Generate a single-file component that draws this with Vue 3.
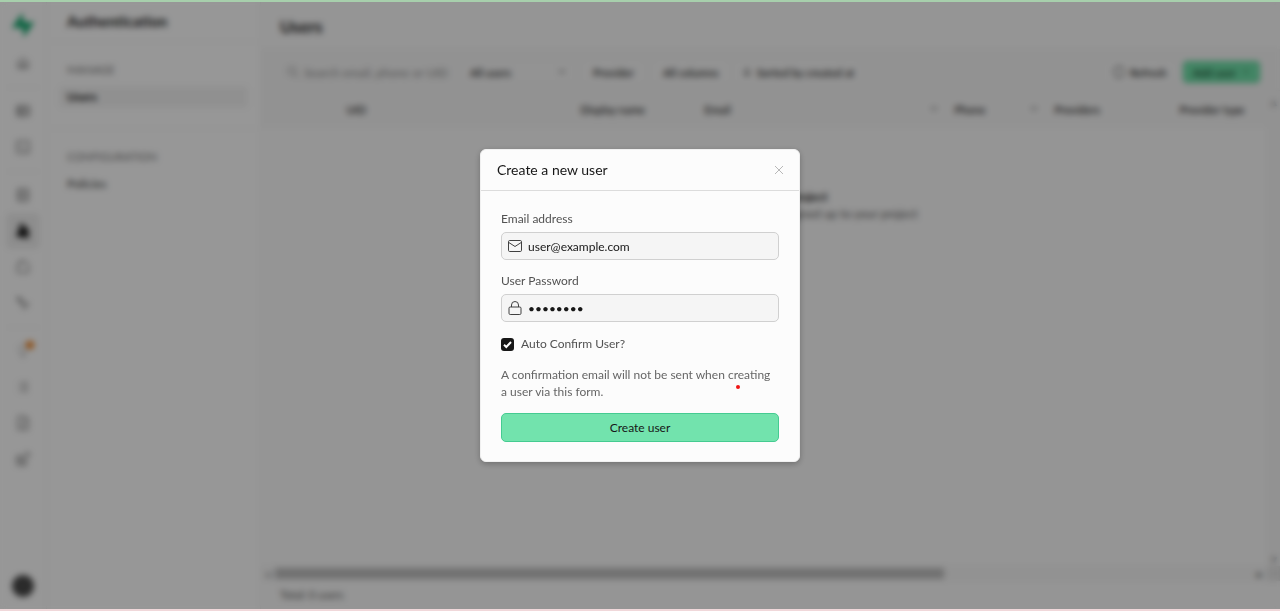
<script setup>
import { ref } from 'vue'

const email = ref('user@example.com')
const password = ref('password')
const autoConfirm = ref(true)

const railGroups = [
  [{ name: 'Home', d: 'M3 7l5-4 5 4v6H3zM6 13V9h4v4' }],
  [
    { name: 'Table editor', d: 'M2 3h12v10H2zM2 6h12M6 3v10M2 9.500h12' },
    { name: 'SQL editor', d: 'M2 2h12v12H2zM5 6l2 2-2 2M8.500 10.500h3' }
  ],
  [
    { name: 'Database', d: 'M3 2h10v12H3zM3 6h10M3 10h10M6 4h1M6 8h1M6 12h1' },
    { name: 'Authentication', d: 'M7 2a2.500 2.500 0 0 1 0 5 2.500 2.500 0 0 1 0-5M2.500 14v-3l2-2h4M9 9h4v5H9zM10 9V6h2v3M4 11h4M4 13h4', active: true },
    { name: 'Storage', d: 'M2.500 13.500V6l3-4h5l3 4v7.500zM5.500 2v4' },
    { name: 'Edge functions', d: 'M2 2l5 5M2 2l3 6 3-3zM7 8l7 1-3 2-2 3z' }
  ],
  [
    { name: 'Advisors', d: 'M6 12h4M6.500 14h3M6 10C2 7 4 2 8 2s6 5 2 8z', dot: true, faint: true },
    { name: 'Logs', d: 'M3 4h1M6 4h7M3 8h1M6 8h7M3 12h1M6 12h7' },
    { name: 'API docs', d: 'M3 1.500h7l3 3v10H3zM10 1.500v3h3M6 8h4M6 11h4' },
    { name: 'Integrations', d: 'M2 5h5v4h4v5H2zM2 9h5v5M9 7l5-5M10 2h4v4' }
  ]
]

const columns = [
  { label: '', cls: 'c-check' },
  { label: 'UID', cls: 'c-uid' },
  { label: 'Display name', cls: 'c-name' },
  { label: 'Email', cls: 'c-email', menu: true },
  { label: 'Phone', cls: 'c-phone', menu: true },
  { label: 'Providers', cls: 'c-prov' },
  { label: 'Provider type', cls: 'c-type' }
]
</script>

<template>
  <div class="screen">
    <div class="app">
      <nav class="rail">
        <a href="#" class="logo" aria-label="Dashboard">
          <svg width="22" height="22" viewBox="0 0 22 22"><path d="M10 1v8h10.500L12 21v-8H1.500z" fill="#12a56b" stroke="#12a56b" stroke-width="2" /></svg>
        </a>
        <div v-for="(group, g) in railGroups" :key="g" class="rail-group">
          <a v-for="item in group" :key="item.name" href="#" class="rail-item" :class="{ active: item.active, faint: item.faint }" :aria-label="item.name">
            <svg width="16" height="16" viewBox="0 0 16 16"><path :d="item.d" /></svg>
            <i v-if="item.dot" class="dot"></i>
          </a>
        </div>
        <button class="avatar" aria-label="Account"></button>
      </nav>

      <aside class="panel">
        <h2>Authentication</h2>
        <section>
          <h3>MANAGE</h3>
          <a href="#" class="selected">Users</a>
        </section>
        <section>
          <h3>CONFIGURATION</h3>
          <a href="#">Policies</a>
        </section>
      </aside>

      <main>
        <h1>Users</h1>
        <div class="toolbar">
          <div class="search">
            <svg width="12" height="12" viewBox="0 0 12 12"><circle cx="5" cy="5" r="4" /><path d="M8 8l4 4" /></svg>
            <input type="text" aria-label="Search users" placeholder="Search email, phone or UID" />
          </div>
          <div class="select">
            <select aria-label="User filter"><option>All users</option></select>
            <svg width="8" height="8" viewBox="0 0 8 8"><path d="M1 2l3 3 3-3" /></svg>
          </div>
          <button class="tool">Provider</button>
          <button class="tool cols">All columns</button>
          <button class="tool sort">
            <svg width="10" height="10" viewBox="0 0 10 10"><path d="M5 0v9M1 5l4 4 4-4" /></svg>
            Sorted by created at
          </button>
          <span class="spacer"></span>
          <button class="tool refresh">
            <svg width="12" height="12" viewBox="0 0 12 12"><path d="M1 7a5 5 0 0 1 9-4V1M11 5a5 5 0 0 1-9 4v2" /></svg>
            Refresh
          </button>
          <button class="tool add">
            Add user
            <svg width="8" height="8" viewBox="0 0 8 8"><path d="M1 2l3 3 3-3" /></svg>
          </button>
        </div>
        <div class="grid-area">
          <div class="grid">
            <table>
              <thead>
                <tr>
                  <th v-for="c in columns" :key="c.cls" :class="c.cls">
                    <span class="th-in">{{ c.label }}
                      <svg v-if="c.menu" width="8" height="8" viewBox="0 0 8 8"><path d="M1 2l3 3 3-3" /></svg>
                    </span>
                  </th>
                </tr>
              </thead>
            </table>
            <div class="empty">
              <strong>No users in your project</strong>
              <span>There are currently no users who signed up to your project</span>
            </div>
            <div class="hscroll"><b class="arrow">◂</b><i class="thumb"></i><b class="arrow end">▸</b></div>
          </div>
          <div class="vscroll"><b>▴</b><b class="low">▾</b><i></i></div>
        </div>
        <footer>Total: 0 users</footer>
      </main>
    </div>

    <div class="overlay">
      <div class="modal" role="dialog" aria-modal="true" aria-labelledby="dialog-title">
        <header>
          <h2 id="dialog-title">Create a new user</h2>
          <button class="close" aria-label="Close">
            <svg width="10" height="10" viewBox="0 0 10 10"><path d="M1 1l8 8M9 1l-8 8" /></svg>
          </button>
        </header>
        <form @submit.prevent>
          <div class="field">
            <label for="email">Email address</label>
            <div class="control">
              <svg width="14" height="14" viewBox="0 0 14 14"><rect x="0.5" y="1.500" width="13" height="11" rx="1.200" /><path d="M0.800 3.500L7 7.500l6.200-4" /></svg>
              <input id="email" v-model="email" type="email" autocomplete="off" />
            </div>
          </div>
          <div class="field">
            <label for="password">User Password</label>
            <div class="control">
              <svg width="14" height="14" viewBox="0 0 14 14"><rect x="1" y="6" width="12" height="7.500" rx="1.200" /><path d="M3.500 6V4a3.500 3.500 0 0 1 7 0v2" /></svg>
              <input id="password" v-model="password" type="password" autocomplete="new-password" />
            </div>
          </div>
          <div class="check">
            <input id="confirm" v-model="autoConfirm" type="checkbox" />
            <svg class="tick" width="13" height="13" viewBox="0 0 13 13"><path d="M3 6.800L5.300 9 10 4" /></svg>
            <label for="confirm">Auto Confirm User?</label>
          </div>
          <p>A confirmation email will not be sent when creating a user via this form.<i class="marker"></i></p>
          <button class="submit" type="submit">Create user</button>
        </form>
      </div>
    </div>
  </div>
</template>

<style>
html, body { margin: 0; background: #fcfcfc; }
</style>

<style scoped>
* { box-sizing: border-box; }
.screen {
  position: relative;
  height: 100vh;
  border-top: 2px solid #a7cfac;
  border-bottom: 2px solid #f0d8da;
  font-family: Lato, sans-serif;
  font-size: 11px;
  color: #222;
  overflow: hidden;
}
a { color: inherit; text-decoration: none; }
h1, h2, h3, p { margin: 0; }
button, input, select { font: inherit; color: inherit; }
svg { fill: none; stroke: currentColor; flex: none; }
.app { display: flex; height: 100%; background: #fcfcfc; }

.rail { width: 47px; flex: none; display: flex; flex-direction: column; align-items: center; border-right: 1px solid #f2f2f2; padding-bottom: 12px; }
.logo { height: 43px; display: flex; align-items: center; padding-top: 3px; }
.rail-group { display: flex; flex-direction: column; }
.rail-group + .rail-group { border-top: 1px solid #f2f2f2; margin-top: 6px; padding-top: 5px; }
.rail-item { position: relative; width: 34px; height: 36px; display: grid; place-items: center; color: #555; border-radius: 5px; }
.rail-item.active { background: #ececec; color: #000; }
.rail-item.active svg { stroke-width: 2; }
.rail-item.faint { color: #999; }
.dot { position: absolute; top: 8px; right: 6px; width: 8px; height: 8px; border-radius: 50%; background: #ec7a12; }
.avatar { margin-top: auto; width: 22px; height: 22px; border: 0; border-radius: 50%; background: #484848; }

.panel { width: 214px; flex: none; border-right: 1px solid #eee; }
.panel h2 { height: 40px; line-height: 38px; padding-left: 20px; font-size: 15px; border-bottom: 1px solid #f2f2f2; }
.panel section { padding: 20px 12px; height: 86px; }
.panel section + section { border-top: 1px solid #f2f2f2; }
.panel h3 { font-size: 11px; line-height: 16px; font-weight: 400; color: #777; padding-left: 8px; margin-bottom: 8px; }
.panel section a { display: block; height: 22px; line-height: 21px; padding-left: 8px; font-size: 12px; border-radius: 4px; color: #333; }
.panel section a.selected { background: #f1f1f1; font-weight: 700; color: #111; }

main { flex: 1; min-width: 0; display: flex; flex-direction: column; background: #f8f8f8; }
h1 { height: 48px; flex: none; line-height: 50px; padding-left: 19px; font-size: 17px; border-bottom: 1px solid #f2f2f2; }
.toolbar { height: 41px; flex: none; display: flex; align-items: center; padding: 4px 20px 0 19px; background: #f4f4f4; border-bottom: 1px solid #f0f0f0; }
.search { width: 175px; height: 22px; display: flex; align-items: center; gap: 5px; padding: 0 6px; border: 1px solid #ededed; border-radius: 4px; color: #888; }
.search input { flex: 1; min-width: 0; padding: 0; border: 0; background: none; font-size: 12px; }
.search input::placeholder { color: #888; }
.select { position: relative; width: 112px; margin: 0 8px; }
.select select { appearance: none; width: 100%; height: 22px; padding: 0 6px; border: 1px solid #f2f2f2; border-radius: 4px; background: #f5f5f5; font-weight: 500; }
.select svg { position: absolute; right: 9px; top: 7px; }
.tool { height: 22px; display: flex; align-items: center; gap: 5px; padding: 0 9px; border: 1px solid #f2f2f2; border-radius: 4px; background: #f6f6f6; font-weight: 500; color: #222; }
.cols { margin: 0 6px 0 9px; }
.sort { padding: 0 6px; }
.spacer { flex: 1; }
.refresh { margin-right: 8px; padding: 0 7px; }
.add { background: #6fdfa8; border-color: #4ecb90; color: #173d2a; gap: 6px; }

.grid-area { flex: 1; display: flex; min-height: 0; }
.grid { flex: 1; min-width: 0; display: flex; flex-direction: column; }
table { width: 100%; border-collapse: collapse; table-layout: fixed; }
th { height: 36px; padding: 0 8px; background: #f4f4f4; border-right: 1px solid #f0f0f0; text-align: left; font-weight: 500; color: #222; }
.th-in { display: flex; justify-content: space-between; align-items: center; }
.c-check { width: 77px; }
.c-uid { width: 234px; }
.c-name { width: 124px; }
.c-email { width: 250px; }
.c-phone { width: 100px; }
.c-prov { width: 125px; }
.empty { flex: 1; display: flex; flex-direction: column; align-items: center; gap: 1px; padding-top: 62px; font-size: 12px; line-height: 16px; }
.empty span { color: #555; }
.hscroll { display: flex; align-items: center; height: 15px; background: #f3f3f3; }
.arrow { width: 14px; text-align: center; color: #aaa; }
.end { margin-left: auto; color: #777; }
.thumb { width: 66.500%; height: 11px; background: #bcbcbc; }
.vscroll { width: 13px; display: flex; flex-direction: column; align-items: center; background: #f3f3f3; color: #aaa; padding-top: 4px; }
.low { margin-top: auto; }
.vscroll i { width: 13px; height: 15px; background: #e2e2e2; }
footer { height: 28px; flex: none; padding-left: 19px; line-height: 27px; font-size: 11px; color: #555; }

.overlay { position: absolute; inset: 0; display: grid; place-items: center; background: rgba(0, 0, 0, 0.4); backdrop-filter: blur(3px); }
.modal { width: 320px; background: #fcfcfc; border: 1px solid #f0f0f0; border-radius: 6px; font-size: 12px; box-shadow: 0 2px 6px rgba(0, 0, 0, 0.25); color: #171717; }
.modal header { height: 41px; display: flex; align-items: center; justify-content: space-between; padding: 0 15px 0 16px; border-bottom: 1px solid #dcdcdc; }
.modal h2 { font-size: 14px; font-weight: 400; line-height: 20px; }
.close { display: flex; padding: 0; border: 0; background: none; color: #b8b8b8; }
form { display: flex; flex-direction: column; gap: 13px; padding: 20px 20px 19px; }
.field { display: flex; flex-direction: column; gap: 5px; }
label { line-height: 16px; color: #525252; }
.control { height: 28px; display: flex; align-items: center; gap: 6px; padding: 0 6px; background: #f5f5f5; border: 1px solid #d0d0d0; border-radius: 5px; color: #404040; }
.control input { flex: 1; min-width: 0; padding: 0; border: 0; outline: 0; background: none; color: #171717; }
.check { position: relative; height: 18px; display: flex; align-items: center; gap: 7px; }
.check input { appearance: none; width: 13px; height: 13px; margin: 0; border-radius: 3px; background: #171717; }
.tick { position: absolute; left: 0; top: 3px; stroke: #fff; stroke-width: 2; pointer-events: none; }
p { position: relative; line-height: 17px; color: #666; }
.marker { position: absolute; right: 39px; top: 19px; width: 4px; height: 4px; border-radius: 50%; background: #f01515; }
.submit { height: 29px; padding: 0; border: 1px solid #45cb91; border-radius: 5px; background: #72e3ad; color: #171717; }
</style>
